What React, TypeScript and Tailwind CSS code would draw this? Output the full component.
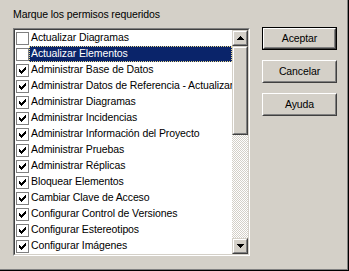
const permisos = [
  { label: 'Actualizar Diagramas', checked: false },
  { label: 'Actualizar Elementos', checked: false, selected: true },
  { label: 'Administrar Base de Datos', checked: true },
  { label: 'Administrar Datos de Referencia - Actualizar', checked: true },
  { label: 'Administrar Diagramas', checked: true },
  { label: 'Administrar Incidencias', checked: true },
  { label: 'Administrar Información del Proyecto', checked: true },
  { label: 'Administrar Pruebas', checked: true },
  { label: 'Administrar Réplicas', checked: true },
  { label: 'Bloquear Elementos', checked: true },
  { label: 'Cambiar Clave de Acceso', checked: true },
  { label: 'Configurar Control de Versiones', checked: true },
  { label: 'Configurar Estereotipos', checked: true },
  { label: 'Configurar Imágenes', checked: true },
];

// classic 7x7 win32 check mark, drawn pixel by pixel
const checkPixels = [
  '......X',
  '.....XX',
  'X...XXX',
  'XX.XXX.',
  'XXXXX..',
  '.XXX...',
  '..X....',
];

function CheckMark() {
  return (
    <svg width="7" height="7" viewBox="0 0 7 7" shapeRendering="crispEdges">
      {checkPixels.flatMap((row, y) =>
        row.split('').map((c, x) =>
          c === 'X' ? <rect key={`${x}-${y}`} x={x} y={y} width="1" height="1" fill="#000" /> : null
        )
      )}
    </svg>
  );
}

function Raised({ className, children }: { className?: string; children?: React.ReactNode }) {
  return (
    <div className={`border border-t-[#d4d0c8] border-l-[#d4d0c8] border-r-[#404040] border-b-[#404040] ${className ?? ''}`}>
      <div className="w-full h-full border border-t-white border-l-white border-r-[#808080] border-b-[#808080] bg-[#d4d0c8] flex items-center justify-center">
        {children}
      </div>
    </div>
  );
}

function Arrow({ down }: { down?: boolean }) {
  return (
    <svg width="7" height="4" viewBox="0 0 7 4" shapeRendering="crispEdges" className={down ? 'rotate-180' : ''}>
      <rect x="3" y="0" width="1" height="1" fill="#000" />
      <rect x="2" y="1" width="3" height="1" fill="#000" />
      <rect x="1" y="2" width="5" height="1" fill="#000" />
      <rect x="0" y="3" width="7" height="1" fill="#000" />
    </svg>
  );
}

function Button({ label, isDefault }: { label: string; isDefault?: boolean }) {
  if (isDefault) {
    return (
      <div className="w-[75px] h-[23px] border border-black">
        <div className="w-full h-full border border-t-white border-l-white border-r-[#404040] border-b-[#404040]">
          <div className="w-full h-full border border-t-[#d4d0c8] border-l-[#d4d0c8] border-r-[#808080] border-b-[#808080] flex items-center justify-center text-black">
            {label}
          </div>
        </div>
      </div>
    );
  }
  return (
    <div className="w-[75px] h-[23px] border border-t-white border-l-white border-r-[#404040] border-b-[#404040]">
      <div className="w-full h-full border border-t-[#d4d0c8] border-l-[#d4d0c8] border-r-[#808080] border-b-[#808080] flex items-center justify-center text-black">
        {label}
      </div>
    </div>
  );
}

export default function App() {
  return (
    <div className="w-[349px] h-[271px] bg-[#d4d0c8] border-r border-b border-black font-['Liberation_Sans',Arial,sans-serif] text-[10.5px] tracking-[-0.1px] text-black">
      <div className="w-full h-full border-r border-b border-[#808080] border-t-0 border-l-0 flex">
        <div className="flex flex-col pl-[13px] pt-[8px]">
          <div className="h-[20px] leading-[13px]">Marque los permisos requeridos</div>

          <div className="w-[237px] h-[228px] border border-t-[#808080] border-l-[#808080] border-r-white border-b-white">
            <div className="w-full h-full border border-t-[#404040] border-l-[#404040] border-r-[#d4d0c8] border-b-[#d4d0c8] bg-white flex">
              <div className="flex-1 flex flex-col overflow-hidden">
                {permisos.map((p) => (
                  <div key={p.label} className="h-[16px] flex items-center shrink-0">
                    <div className="w-[13px] h-[13px] ml-[1px] border border-[#808080] bg-white flex items-center justify-center shrink-0">
                      {p.checked && <CheckMark />}
                    </div>
                    <div
                      className={
                        p.selected
                          ? 'flex-1 h-[16px] pl-[1px] bg-[#0a246a] text-white border border-dotted border-[#e8d88a] flex items-center whitespace-nowrap overflow-hidden'
                          : 'flex-1 h-[16px] pl-[2px] flex items-center whitespace-nowrap overflow-hidden'
                      }
                    >
                      {p.label}
                    </div>
                  </div>
                ))}
              </div>

              <div className="w-[16px] flex flex-col shrink-0">
                <Raised className="w-[16px] h-[16px] shrink-0">
                  <Arrow />
                </Raised>
                <Raised className="w-[16px] h-[89px] shrink-0" />
                <div className="flex-1 bg-[repeating-conic-gradient(#d4d0c8_0_25%,#ffffff_0_50%)] bg-[length:2px_2px]" />
                <Raised className="w-[16px] h-[16px] shrink-0">
                  <Arrow down />
                </Raised>
              </div>
            </div>
          </div>
        </div>

        <div className="flex flex-col gap-[10px] ml-[12px] pt-[27px]">
          <Button label="Aceptar" isDefault />
          <Button label="Cancelar" />
          <Button label="Ayuda" />
        </div>
      </div>
    </div>
  );
}
